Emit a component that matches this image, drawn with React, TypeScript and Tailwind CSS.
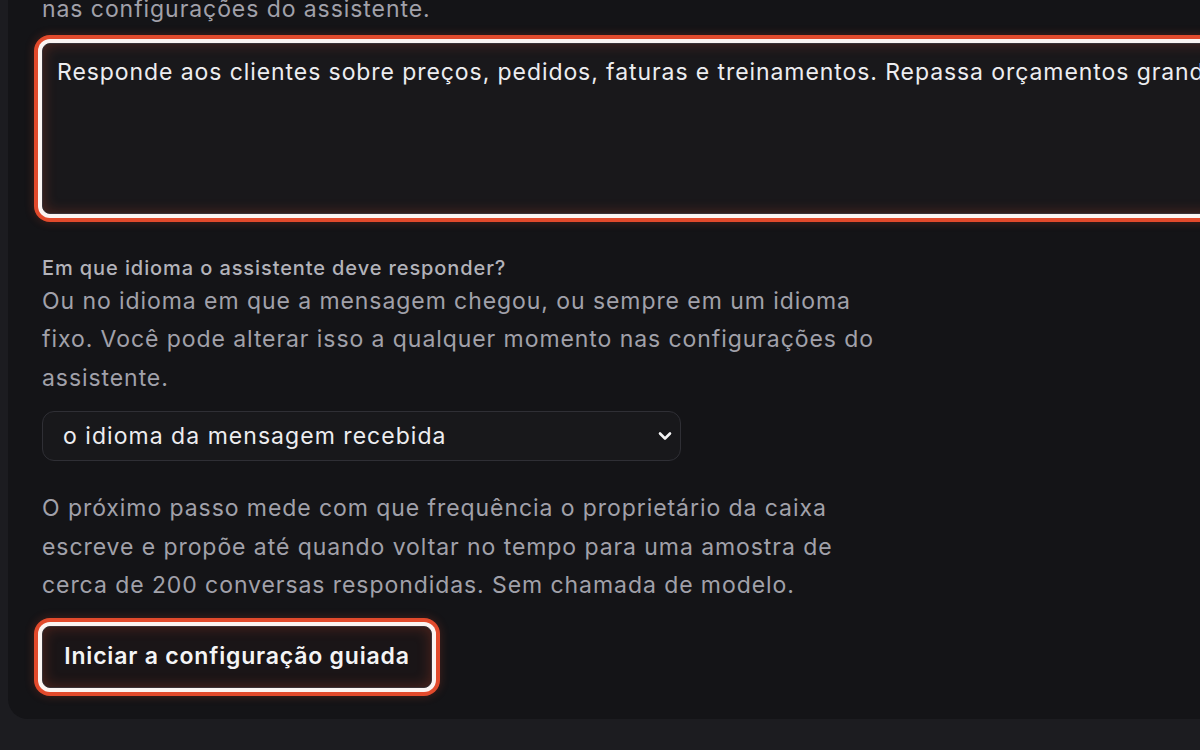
import { useState } from "react";

const ring =
  "shadow-[inset_0_0_14px_rgba(226,74,44,0.28),0_0_0_4px_#fbf4f2,0_0_0_8px_#e24a2c,0_0_10px_8px_rgba(226,74,44,0.25)]";

function Chevron() {
  return (
    <svg
      viewBox="0 0 14 9"
      className="pointer-events-none absolute right-[9px] top-1/2 h-[9px] w-[14px] -translate-y-1/2"
      fill="none"
      stroke="#f4f4f5"
      strokeWidth="2.6"
      strokeLinecap="round"
      strokeLinejoin="round"
    >
      <path d="M2 2l5 5 5-5" />
    </svg>
  );
}

export default function App() {
  const [brief, setBrief] = useState(
    "Responde aos clientes sobre preços, pedidos, faturas e treinamentos. Repassa orçamentos grandes para a equipe comercial."
  );
  const [lang, setLang] = useState("incoming");

  return (
    <div className="h-[750px] overflow-hidden bg-[#1c1c20] font-['Inter','Noto_Sans',sans-serif] tracking-[0.058em] antialiased">
      <div className="-mt-[10px] ml-2 w-[2000px] rounded-b-[20px] bg-[#141417] px-[34px] pb-[31px]">
        <p className="text-[23px] leading-[38.5px] text-[#a1a1aa]">
          nas configurações do assistente.
        </p>

        <textarea
          value={brief}
          onChange={(e) => setBrief(e.target.value)}
          className={`mt-[14px] block h-[171px] w-full resize-none rounded-[8px] border border-[#3a3236] bg-[#19181b] px-[14px] py-[12px] text-[23px] leading-[33px] tracking-[0.04em] text-[#ededf0] outline-none ${ring}`}
        />

        <label className="mt-[40px] block text-[20px] font-medium leading-[28px] tracking-[0.045em] text-[#b3b3ba]">
          Em que idioma o assistente deve responder?
        </label>
        <p className="max-w-[850px] text-[23px] leading-[38.5px] text-[#a1a1aa]">
          Ou no idioma em que a mensagem chegou, ou sempre em um idioma fixo.
          Você pode alterar isso a qualquer momento nas configurações do
          assistente.
        </p>

        <div className="relative mt-[14px] w-[639px]">
          <select
            value={lang}
            onChange={(e) => setLang(e.target.value)}
            className="block h-[50px] w-full appearance-none rounded-[12px] border border-[#2f2f35] bg-[#18181b] pl-[20px] text-[23px] tracking-[0.045em] text-[#ededf0] outline-none"
          >
            <option value="incoming">o idioma da mensagem recebida</option>
            <option value="pt">sempre em português</option>
            <option value="en">sempre em inglês</option>
          </select>
          <Chevron />
        </div>

        <p className="mt-[28px] max-w-[850px] text-[23px] leading-[38.5px] text-[#a1a1aa]">
          O próximo passo mede com que frequência o proprietário da caixa
          escreve e propõe até quando voltar no tempo para uma amostra de cerca
          de 200 conversas respondidas. Sem chamada de modelo.
        </p>

        <button
          className={`mt-[21px] block h-[62px] w-[390px] rounded-[8px] border border-[#3a3236] bg-[#1a1517] text-[23px] font-semibold tracking-[0.035em] text-[#f4f4f5] ${ring}`}
        >
          Iniciar a configuração guiada
        </button>
      </div>
    </div>
  );
}
